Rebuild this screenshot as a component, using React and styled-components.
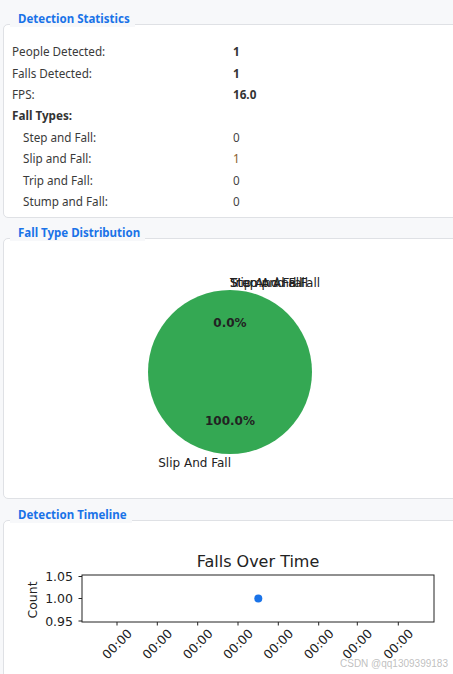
import React from "react";
import styled, { createGlobalStyle } from "styled-components";

const GlobalStyle = createGlobalStyle`
  html, body {
    margin: 0;
    padding: 0;
    background: #f7f8fa;
  }
  body {
    font-family: "Noto Sans", "Open Sans", sans-serif;
  }
`;

const stats = [
  { label: "People Detected:", value: "1", bold: true },
  { label: "Falls Detected:", value: "1", bold: true },
  { label: "FPS:", value: "16.0", bold: true },
];

const fallTypes = [
  { label: "Step and Fall:", value: 0 },
  { label: "Slip and Fall:", value: 1 },
  { label: "Trip and Fall:", value: 0 },
  { label: "Stump and Fall:", value: 0 },
];

const xTicks = [117, 157.3, 197.7, 238, 278.3, 318.7, 357.3, 398.3];

const App = () => {
  return (
    <Page>
      <GlobalStyle />

      <Group $h={194}>
        <GroupTitle>Detection Statistics</GroupTitle>
        <StatsList>
          {stats.map((s) => (
            <StatRow key={s.label}>
              <span>{s.label}</span>
              <Value $bold={s.bold}>{s.value}</Value>
            </StatRow>
          ))}
          <StatRow>
            <SectionLabel>Fall Types:</SectionLabel>
          </StatRow>
          {fallTypes.map((f) => (
            <StatRow key={f.label} $indent>
              <span>{f.label}</span>
              <Value $highlight={f.value > 0}>{f.value}</Value>
            </StatRow>
          ))}
        </StatsList>
      </Group>

      <Group $h={261}>
        <GroupTitle>Fall Type Distribution</GroupTitle>
        <Chart width="449" height="259" viewBox="4 239 449 259">
          <circle cx="230" cy="372" r="82" fill="#34a853" />
          <MplText x="230" y="283" fontSize="12">Step And Fall</MplText>
          <MplText x="230" y="283" fontSize="12">Trip And Fall</MplText>
          <MplText x="230" y="283" fontSize="12">Stump And Fall</MplText>
          <MplText x="231" y="463" fontSize="12" textAnchor="end">
            Slip And Fall
          </MplText>
          <MplText x="230" y="323" fontSize="12" fontWeight="700" textAnchor="middle">
            0.0%
          </MplText>
          <MplText x="230" y="421" fontSize="12" fontWeight="700" textAnchor="middle">
            100.0%
          </MplText>
        </Chart>
      </Group>

      <Group $h={170} $gap={21}>
        <GroupTitle>Detection Timeline</GroupTitle>
        <Chart width="449" height="168" viewBox="4 520 449 168">
          <MplText x="258" y="560" fontSize="16" textAnchor="middle">
            Falls Over Time
          </MplText>
          <rect x="82" y="574" width="352" height="47" fill="none" stroke="#222" strokeWidth="1" />
          {[
            { y: 575.5, t: "1.05" },
            { y: 597.5, t: "1.00" },
            { y: 620, t: "0.95" },
          ].map((tk) => (
            <g key={tk.t}>
              <line x1="78.5" x2="82" y1={tk.y} y2={tk.y} stroke="#222" strokeWidth="1" />
              <MplText x="73" y={tk.y} fontSize="12.5" textAnchor="end">
                {tk.t}
              </MplText>
            </g>
          ))}
          <MplText
            x="0"
            y="0"
            fontSize="12.5"
            textAnchor="middle"
            transform="translate(32 599) rotate(-90)"
          >
            Count
          </MplText>
          {xTicks.map((x) => (
            <g key={x}>
              <line x1={x} x2={x} y1="621" y2="624.5" stroke="#222" strokeWidth="1" />
              <MplText
                x="0"
                y="0"
                fontSize="12.5"
                textAnchor="middle"
                transform={`translate(${x} 643) rotate(-45)`}
              >
                00:00
              </MplText>
            </g>
          ))}
          <circle cx="258.3" cy="597.5" r="4" fill="#1a73e8" />
        </Chart>
      </Group>

      <Watermark>CSDN @qq1309399183</Watermark>
    </Page>
  );
};

export default App;

const Page = styled.div`
  position: relative;
  width: 453px;
  height: 674px;
  overflow: hidden;
  box-sizing: border-box;
  padding: 24px 0 0 3px;
  display: flex;
  flex-direction: column;
`;

const Group = styled.section`
  position: relative;
  flex: none;
  width: 462px;
  height: ${(p) => p.$h}px;
  margin-top: ${(p) => p.$gap ?? 20}px;
  box-sizing: border-box;
  background: #fff;
  border: 1px solid #dfe1e5;
  border-radius: 5px;

  &:first-child {
    margin-top: 0;
  }
`;

const GroupTitle = styled.div`
  position: absolute;
  top: -15px;
  left: 6px;
  padding: 0 5px 0 8px;
  background: #f7f8fa;
  font-size: 11.5px;
  font-weight: 700;
  line-height: 17px;
  color: #1a73e8;
  white-space: nowrap;
`;

const StatsList = styled.div`
  display: flex;
  flex-direction: column;
  padding: 15.5px 0 0 8px;
`;

const StatRow = styled.div`
  display: grid;
  grid-template-columns: ${(p) => (p.$indent ? 210 : 221)}px auto;
  align-items: center;
  height: 21.4px;
  padding-left: ${(p) => (p.$indent ? 11 : 0)}px;
  font-size: 11.7px;
  color: #3a3a3a;
`;

const SectionLabel = styled.span`
  font-weight: 700;
  color: #333;
`;

const Value = styled.span`
  font-weight: ${(p) => (p.$bold ? 700 : 400)};
  color: ${(p) => (p.$highlight ? "#8a5a2b" : p.$bold ? "#333" : "#444")};
`;

const Chart = styled.svg`
  display: block;
`;

const MplText = styled.text`
  font-family: "DejaVu Sans", sans-serif;
  fill: #222;
  dominant-baseline: central;
`;

const Watermark = styled.div`
  position: absolute;
  right: 5px;
  bottom: 5px;
  font-family: "Liberation Sans", Arial, sans-serif;
  font-size: 10px;
  color: rgba(170, 170, 170, 0.75);
`;
